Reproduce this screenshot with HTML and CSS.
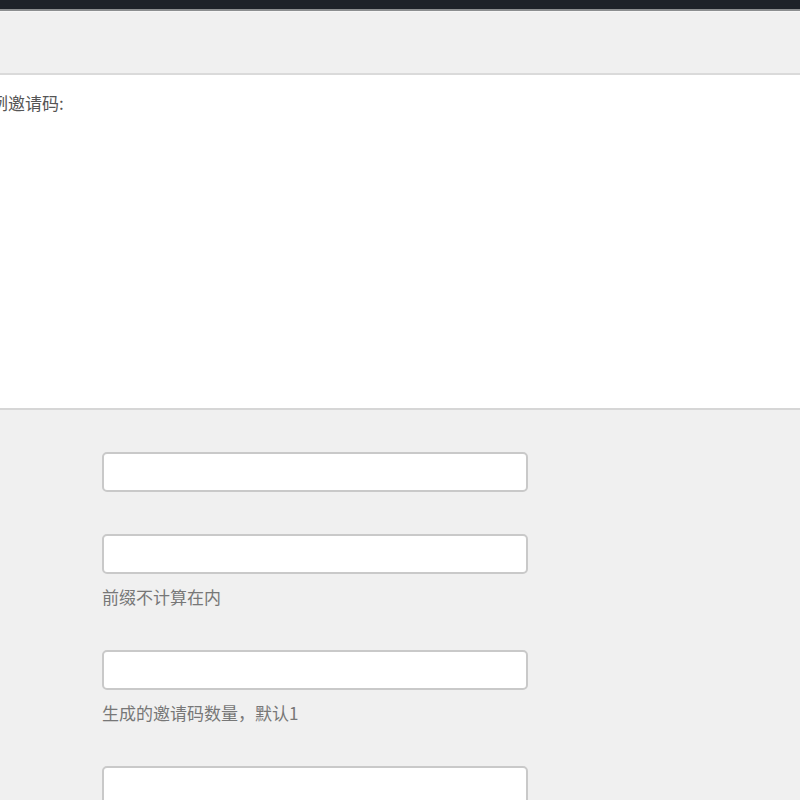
FILE: index.html
```html
<!DOCTYPE html>
<html lang="zh-CN">
<head>
  <meta charset="UTF-8">
  <meta name="viewport" content="width=device-width, initial-scale=1.0">
  <title>邀请码</title>
  <link rel="stylesheet" href="styles.css">
</head>
<body>
  <div class="topbar"></div>
  <div class="toolbar"></div>

  <div class="panel">
    <p class="panel-title">示例邀请码:</p>
  </div>

  <form class="form">
    <div class="group">
      <input type="text" class="field">
    </div>
    <div class="group">
      <input type="text" class="field">
      <p class="help">前缀不计算在内</p>
    </div>
    <div class="group">
      <input type="text" class="field">
      <p class="help">生成的邀请码数量，默认1</p>
    </div>
    <div class="group">
      <input type="text" class="field">
    </div>
  </form>
</body>
</html>
```

FILE: styles.css
```css
* { margin: 0; padding: 0; box-sizing: border-box; }
html, body { width: 100%; height: 100%; }
body { background: #f0f0f0; font-family: "Noto Sans CJK SC", "Noto Sans", sans-serif; color: #555; overflow: hidden; }
.topbar { height: 9px; background: #1e2229; border-bottom: 2px solid #8c8e90; box-sizing: content-box; }
.toolbar { height: 64px; background: #f0f0f0; border-top: 1px solid #f6f6f6; border-bottom: 2px solid #dadada; }
.panel { height: 335px; background: #fff; border-bottom: 2px solid #d6d6d6; padding-top: 16px; }
.panel-title { font-size: 17px; line-height: 24px; margin-left: -26px; color: #555; }
.form { padding: 42px 0 0 102px; }
.group { margin-bottom: 42px; }
.field { display: block; width: 426px; height: 40px; background: #fff; border: 2px solid #c9c9c9; border-radius: 5px; font-size: 16px; padding: 0 10px; outline: none; }
.help { margin-top: 11px; font-size: 17px; line-height: 23px; color: #777; }
```
